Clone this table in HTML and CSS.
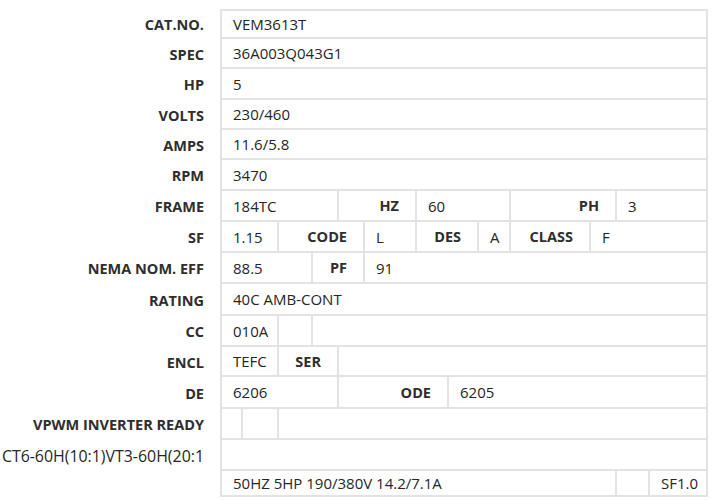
FILE: index.html
```html
<!DOCTYPE html>
<html>
<head>
<meta charset="utf-8">
<link rel="stylesheet" href="styles.css">
</head>
<body>
<div class="sheet">
  <div class="lbl">CAT.NO.</div><div class="c s13">VEM3613T</div>
  <div class="lbl">SPEC</div><div class="c s13">36A003Q043G1</div>
  <div class="lbl">HP</div><div class="c s13">5</div>
  <div class="lbl">VOLTS</div><div class="c s13">230/460</div>
  <div class="lbl">AMPS</div><div class="c s13">11.6/5.8</div>
  <div class="lbl">RPM</div><div class="c s13">3470</div>

  <div class="lbl">FRAME</div><div class="c s4">184TC</div><div class="c h s2">HZ</div><div class="c s3">60</div><div class="c h s2">PH</div><div class="c s2">3</div>

  <div class="lbl">SF</div><div class="c s2">1.15</div><div class="c h s3">CODE</div><div class="c s1">L</div><div class="c h s2">DES</div><div class="c s1">A</div><div class="c h s1">CLASS</div><div class="c s3">F</div>

  <div class="lbl">NEMA NOM. EFF</div><div class="c s3">88.5</div><div class="c h s2">PF</div><div class="c s8">91</div>

  <div class="lbl">RATING</div><div class="c s13">40C AMB-CONT</div>

  <div class="lbl">CC</div><div class="c s2">010A</div><div class="c s1"></div><div class="c s10"></div>

  <div class="lbl">ENCL</div><div class="c s2">TEFC</div><div class="c h s2">SER</div><div class="c s9"></div>

  <div class="lbl">DE</div><div class="c s4">6206</div><div class="c h s3">ODE</div><div class="c s6">6205</div>

  <div class="lbl">VPWM INVERTER READY</div><div class="c s1"></div><div class="c s1"></div><div class="c s11"></div>

  <div class="lbl plain">CT6-60H(10:1)VT3-60H(20:1</div><div class="c s13"></div>

  <div class="lbl"></div><div class="c s11">50HZ 5HP 190/380V 14.2/7.1A</div><div class="c s1"></div><div class="c s1">SF1.0</div>
</div>
</body>
</html>
```

FILE: styles.css
```css
html, body {
  margin: 0;
  padding: 0;
  background: #ffffff;
}

body {
  font-family: "Open Sans", "Noto Sans", sans-serif;
  font-size: 15px;
  color: #262626;
}

.sheet {
  display: grid;
  margin-top: 9px;
  grid-template-columns: 220px 23px 36px 34px 26px 26px 52px 32px 30px 32px 80px 26px 33px 58px;
  grid-template-rows: 30px 30px 31px 30px 30px 31px 31px 31px 31px 32px 31px 30px 32px 31px 31px 26px;
}

.lbl {
  grid-column: 1;
  display: flex;
  align-items: center;
  justify-content: flex-end;
  padding-right: 16px;
  font-size: 14.5px;
  font-weight: 700;
  color: #2e2e2e;
  white-space: nowrap;
}

.lbl.plain {
  font-size: 15.9px;
  font-weight: 500;
  color: #262626;
}

.c {
  box-sizing: border-box;
  display: flex;
  align-items: center;
  padding: 0 0 0 11px;
  font-weight: 500;
  border-right: 2px solid #e3e3e3;
  border-bottom: 2px solid #e3e3e3;
  white-space: nowrap;
}

.lbl + .c {
  border-left: 2px solid #e3e3e3;
}

.c:nth-child(2) {
  border-top: 2px solid #e3e3e3;
}

.c.h {
  justify-content: flex-end;
  padding: 0 16px 0 0;
  font-size: 14.5px;
  font-weight: 700;
  color: #2e2e2e;
}

.s1 { grid-column-end: span 1; }
.s2 { grid-column-end: span 2; }
.s3 { grid-column-end: span 3; }
.s4 { grid-column-end: span 4; }
.s6 { grid-column-end: span 6; }
.s8 { grid-column-end: span 8; }
.s9 { grid-column-end: span 9; }
.s10 { grid-column-end: span 10; }
.s11 { grid-column-end: span 11; }
.s13 { grid-column-end: span 13; }
```
